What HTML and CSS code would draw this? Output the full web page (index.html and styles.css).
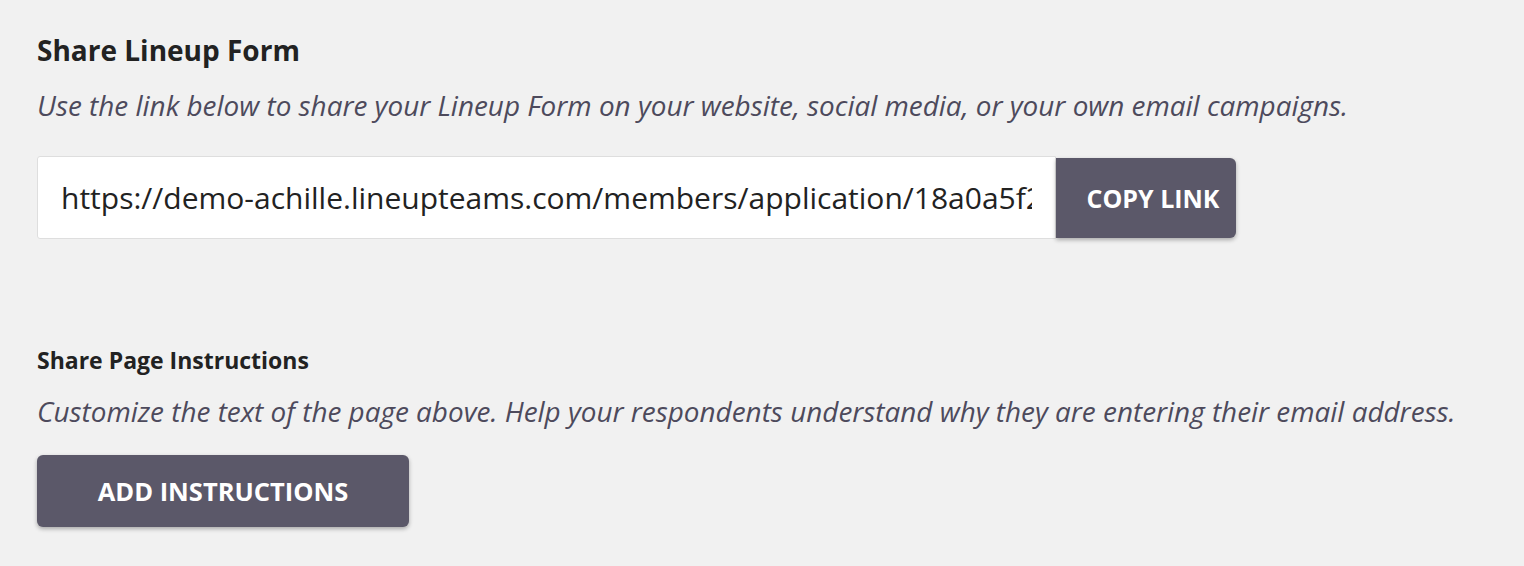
FILE: index.html
```html
<!DOCTYPE html>
<html lang="en">
<head>
    <meta charset="UTF-8">
    <meta name="viewport" content="width=device-width, initial-scale=1.0">
    <title>Share Lineup Form</title>
    <link rel="stylesheet" href="styles.css">
</head>
<body>
    <div class="container">
        <section class="share-form">
            <h1>Share Lineup Form</h1>
            <p class="hint">Use the link below to share your Lineup Form on your website, social media, or your own email campaigns.</p>
            <div class="link-row">
                <input class="link-input" type="text" readonly value="https://demo-achille.lineupteams.com/members/application/18a0a5f2c7d84e1b">
                <button class="btn btn-copy">Copy Link</button>
            </div>
        </section>

        <section class="share-instructions">
            <h2>Share Page Instructions</h2>
            <p class="hint hint-tight">Customize the text of the page above. Help your respondents understand why they are entering their email address.</p>
            <button class="btn btn-add">Add Instructions</button>
        </section>
    </div>
</body>
</html>
```

FILE: styles.css
```css
body {
    font-family: "Open Sans", Arial, sans-serif;
    background-color: #f1f1f1;
    margin: 0;
    color: #222222;
}
.container {
    padding: 33px 37px;
}
h1 {
    font-size: 28px;
    font-weight: 700;
    margin: 0 0 19px;
    line-height: 34px;
}
h2 {
    font-size: 23px;
    font-weight: 700;
    margin: 0 0 17px;
    line-height: 30px;
}
.hint {
    font-style: italic;
    font-size: 27.9px;
    color: #4d4a5c;
    margin: 0 0 32px;
    line-height: 38px;
    white-space: nowrap;
}
.hint-tight {
    margin-bottom: 25px;
}
.link-row {
    display: flex;
    align-items: center;
}
.link-input {
    box-sizing: border-box;
    width: 1019px;
    height: 83px;
    padding: 0 23px;
    border: 1px solid #dedede;
    border-radius: 3px 0 0 3px;
    background: #ffffff;
    font-family: inherit;
    font-size: 30px;
    color: #222222;
    outline: none;
}
.btn {
    border: none;
    background-color: #5b5869;
    color: #ffffff;
    font-family: inherit;
    font-weight: 700;
    font-size: 25px;
    text-transform: uppercase;
    cursor: pointer;
    box-shadow: 0 2px 4px rgba(0, 0, 0, 0.3);
}
.btn-copy {
    width: 180px;
    height: 80px;
    padding: 0 0 0 14px;
    border-radius: 0 6px 6px 0;
}
.share-instructions {
    margin-top: 106px;
}
.btn-add {
    width: 372px;
    height: 72px;
    border-radius: 6px;
    font-size: 25.5px;
}
```
